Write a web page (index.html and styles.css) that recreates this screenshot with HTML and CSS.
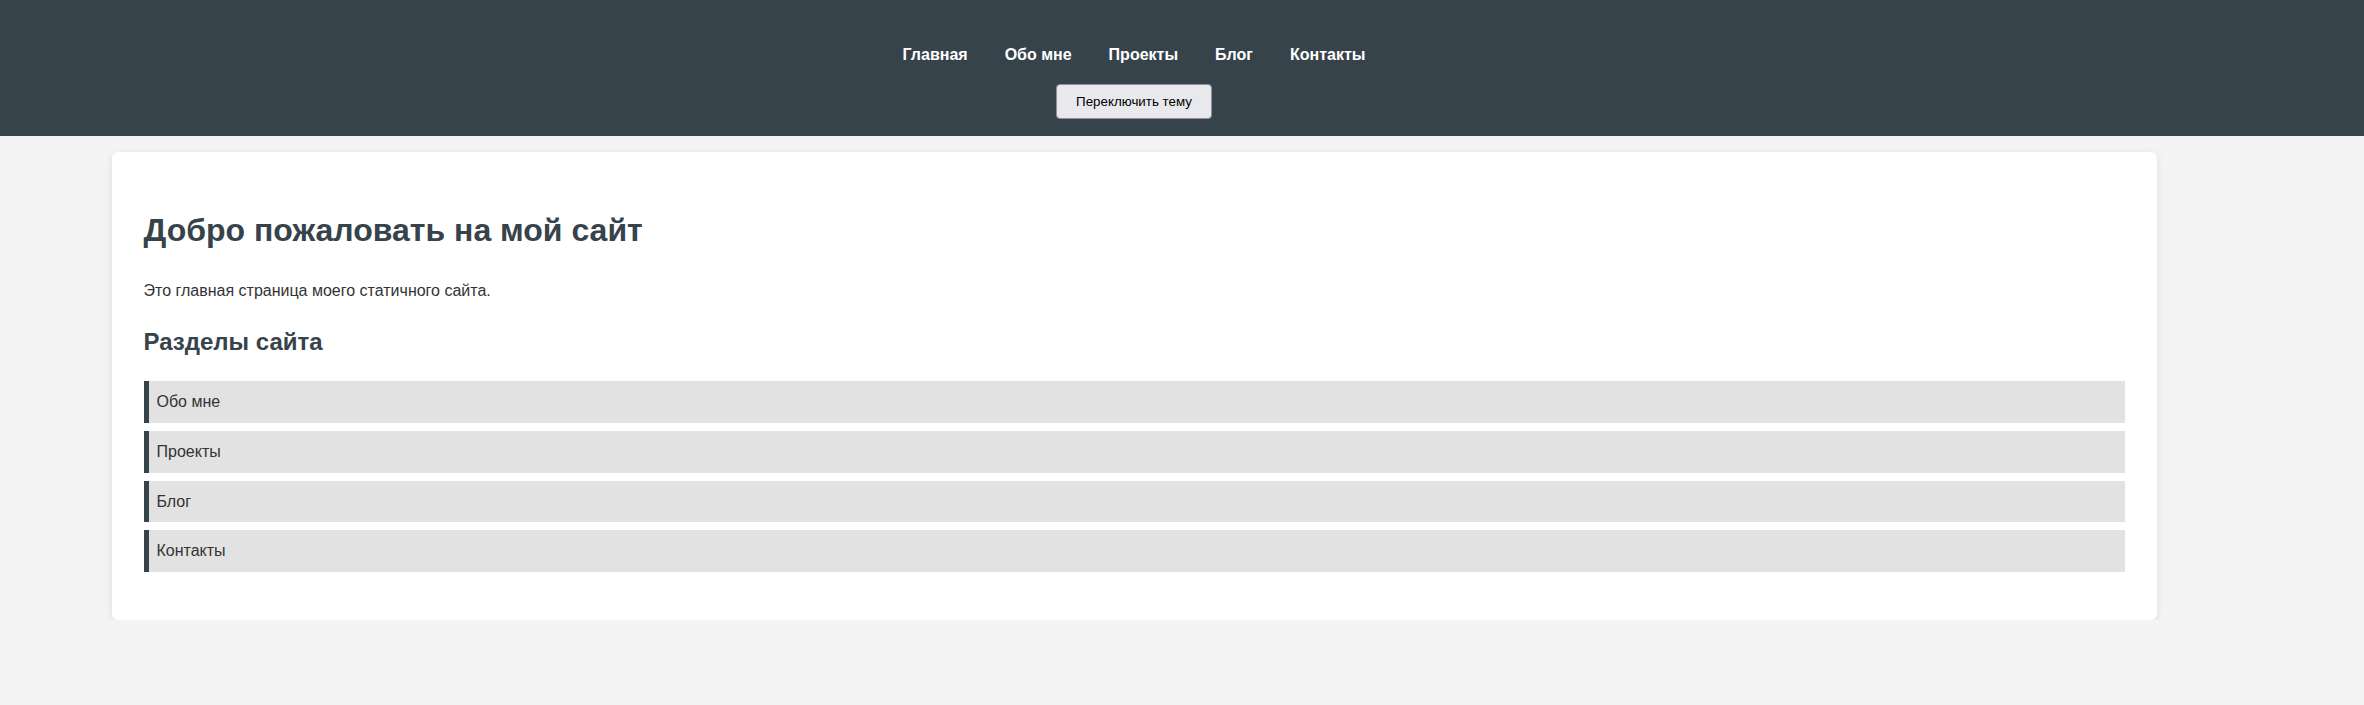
FILE: index.html
```html
<!DOCTYPE html>
<html lang="ru">
<head>
<meta charset="utf-8">
<title>Главная</title>
<link rel="stylesheet" href="styles.css">
</head>
<body>
<header class="site-header">
  <div class="header-inner">
    <nav class="nav">
      <a class="nav-link" href="#">Главная</a>
      <a class="nav-link" href="#">Обо мне</a>
      <a class="nav-link" href="#">Проекты</a>
      <a class="nav-link" href="#">Блог</a>
      <a class="nav-link" href="#">Контакты</a>
    </nav>
    <button class="theme-btn" type="button">Переключить тему</button>
  </div>
</header>
<main class="page">
  <section class="card">
    <h1 class="title">Добро пожаловать на мой сайт</h1>
    <p class="lead">Это главная страница моего статичного сайта.</p>
    <h2 class="subtitle">Разделы сайта</h2>
    <ul class="sections">
      <li class="section-item">Обо мне</li>
      <li class="section-item">Проекты</li>
      <li class="section-item">Блог</li>
      <li class="section-item">Контакты</li>
    </ul>
  </section>
</main>
</body>
</html>
```
FILE: styles.css
```css
html, body {
  margin: 0;
  padding: 0;
}

body {
  background: #f4f4f4;
  color: #333;
  font-family: "Liberation Sans", Arial, sans-serif;
  font-size: 16px;
  line-height: 1.6;
}

.site-header {
  background: #36434b;
  padding: 42px 0 17px;
}

.header-inner {
  width: 2268px;
  display: flex;
  flex-direction: column;
  align-items: center;
}

.nav {
  display: flex;
  gap: 37px;
}

.nav-link {
  color: #fff;
  font-weight: bold;
  text-decoration: none;
}

.theme-btn {
  margin-top: 16px;
  font-family: "Liberation Sans", Arial, sans-serif;
  font-size: 13.333px;
  line-height: normal;
  padding: 9px 19px;
  background: #e9e9ed;
  color: #000;
  border: 1px solid #8f8f9d;
  border-radius: 4px;
}

.page {
  width: 2268px;
  padding-top: 16px;
}

.card {
  box-sizing: border-box;
  width: 2045px;
  margin: 0 auto;
  background: #fff;
  border-radius: 6px;
  padding: 32px;
  box-shadow: 0 2px 8px rgba(0, 0, 0, 0.1);
}

.title {
  font-size: 32px;
  margin: 21.44px 0;
  color: #36434b;
}

.lead {
  margin: 16px 0;
}

.subtitle {
  font-size: 24px;
  margin: 19.92px 0;
  color: #36434b;
}

.sections {
  list-style: none;
  margin: 16px 0;
  padding: 0;
}

.section-item {
  background: #e2e2e2;
  border-left: 5px solid #36434b;
  padding: 8px;
  margin-bottom: 8px;
}
```
